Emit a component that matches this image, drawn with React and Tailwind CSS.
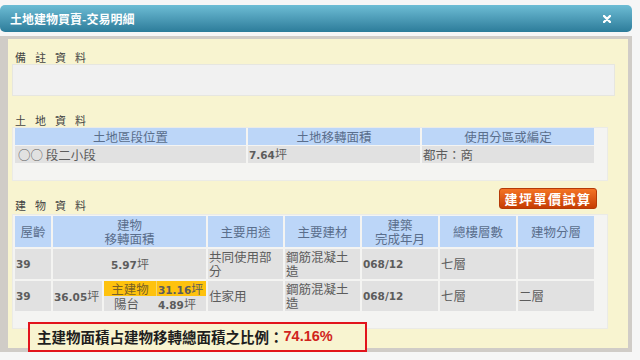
const cjk = "font-['Noto_Sans_CJK_TC',sans-serif]"
const num = "font-['DejaVu_Sans','Noto_Sans_CJK_TC',sans-serif] font-bold text-[10.5px]"

function Num({ v }) {
  return (
    <span>
      <span className={num}>{v}</span>
      <span className="text-[12px]">坪</span>
    </span>
  )
}

function SectionLabel({ children, className = '' }) {
  return (
    <div className={`text-[11px] leading-[14px] tracking-[9px] text-[#444] ${className}`}>
      {children}
    </div>
  )
}

const headCell = 'bg-[#bcd6f8] text-[#5a6e8c] text-[12.5px] leading-[14px] flex items-center justify-center text-center'
const dataCell = 'bg-[#e1e1e1] text-[#5c5c5c] text-[12.5px] leading-[14px] flex items-center pl-[1px]'

export default function App() {
  return (
    <div className={`w-[640px] h-[360px] bg-[#f6f6f6] relative overflow-hidden ${cjk}`}>
      {/* title bar */}
      <div className="mt-[5px] w-[632px] h-[27px] rounded-[5px] bg-linear-to-b from-[#6dbdd5] to-[#2c7c9a] flex items-center justify-between pl-[10px] pr-[21px]">
        <span className="text-white font-bold text-[12px]">土地建物買賣-交易明細</span>
        <svg width="8" height="8" viewBox="0 0 8 8">
          <path d="M1 1L7 7M7 1L1 7" stroke="#fff" strokeWidth="2.4" strokeLinecap="round" />
        </svg>
      </div>

      {/* body frame */}
      <div className="mt-[4px] w-[632px] h-[316px] bg-[#d0ccc7] pl-[8px] pr-[4px] pt-[3px] pb-[4px]">
        <div className="h-full bg-[#f8f4d0] flex flex-col">
          <SectionLabel className="mt-[11px] ml-[7px]">備註資料</SectionLabel>
          <div className="ml-[4px] w-[603px] h-[32px] bg-[#f1f1f1] border border-[#e6e6e0]" />

          <SectionLabel className="mt-[17px] ml-[7px]">土地資料</SectionLabel>
          <div className="ml-[4px] w-[596px] h-[54px] bg-[#f4f4f2] border border-[#ebebe6] pl-[2px]">
            <div className="grid grid-cols-[231px_172px_172px] grid-rows-[17px_17px] gap-x-[2px] gap-y-[1px]">
              <div className={headCell}>土地區段位置</div>
              <div className={headCell}>土地移轉面積</div>
              <div className={headCell}>使用分區或編定</div>
              <div className={`${dataCell} pl-[3px]`}>○○ 段二小段</div>
              <div className={dataCell}><Num v="7.64" /></div>
              <div className={dataCell}>都市：商</div>
            </div>
          </div>

          <div className="mt-[7px] w-[589px] flex items-start justify-between">
            <SectionLabel className="mt-[10px] ml-[7px]">建物資料</SectionLabel>
            <button className="w-[98px] h-[21px] rounded-[3px] bg-linear-to-b from-[#f47424] to-[#c63c02] border border-[#b53a06] text-white font-bold text-[13px] tracking-[1.5px] leading-none">
              建坪單價試算
            </button>
          </div>

          <div className="mt-[2px] ml-[4px] w-[596px] h-[115px] bg-[#f4f4f2] border border-[#ebebe6] pl-[2px] pt-[1px]">
            <div className="grid grid-cols-[36px_49px_51px_49px_75px_75px_76px_76px_76px] grid-rows-[31px_30px_30px] gap-[2px]">
              <div className={headCell}>屋齡</div>
              <div className={`${headCell} col-span-3`}>建物<br />移轉面積</div>
              <div className={headCell}>主要用途</div>
              <div className={headCell}>主要建材</div>
              <div className={headCell}>建築<br />完成年月</div>
              <div className={headCell}>總樓層數</div>
              <div className={headCell}>建物分層</div>

              <div className={dataCell}><span className={num}>39</span></div>
              <div className={`${dataCell} col-span-3 pl-[58px]`}><Num v="5.97" /></div>
              <div className={dataCell}>共同使用部<br />分</div>
              <div className={dataCell}>鋼筋混凝土<br />造</div>
              <div className={dataCell}><span className={num}>068/12</span></div>
              <div className={dataCell}>七層</div>
              <div className={dataCell} />

              <div className={dataCell}><span className={num}>39</span></div>
              <div className={dataCell}><Num v="36.05" /></div>
              <div className="col-span-2 bg-[#e1e1e1] grid grid-cols-[52px_50px] grid-rows-[15px_15px] text-[12.5px] leading-[15px] text-[#5c5c5c]">
                <div className="bg-[#fec20e] text-center text-[#7a6226]">主建物</div>
                <div className="bg-[#fec20e] border-l border-[#f6d66a] pl-[1px]"><Num v="31.16" /></div>
                <div className="pl-[10px]">陽台</div>
                <div className="pl-[2px]"><Num v="4.89" /></div>
              </div>
              <div className={dataCell}>住家用</div>
              <div className={dataCell}>鋼筋混凝土<br />造</div>
              <div className={dataCell}><span className={num}>068/12</span></div>
              <div className={dataCell}>七層</div>
              <div className={dataCell}>二層</div>
            </div>
          </div>
        </div>
      </div>

      {/* highlighted ratio note */}
      <div className="absolute left-[28px] top-[322px] w-[339px] h-[30px] border-2 border-[#e2141c] bg-[#f8f4d0] flex items-center pl-[7px]">
        <span className="text-[14.5px] font-bold text-[#1e1e1e]">主建物面積占建物移轉總面積之比例：</span>
        <span className="text-[14.5px] font-bold text-[#d0241c] font-['Liberation_Sans',sans-serif]">74.16%</span>
      </div>
    </div>
  )
}
